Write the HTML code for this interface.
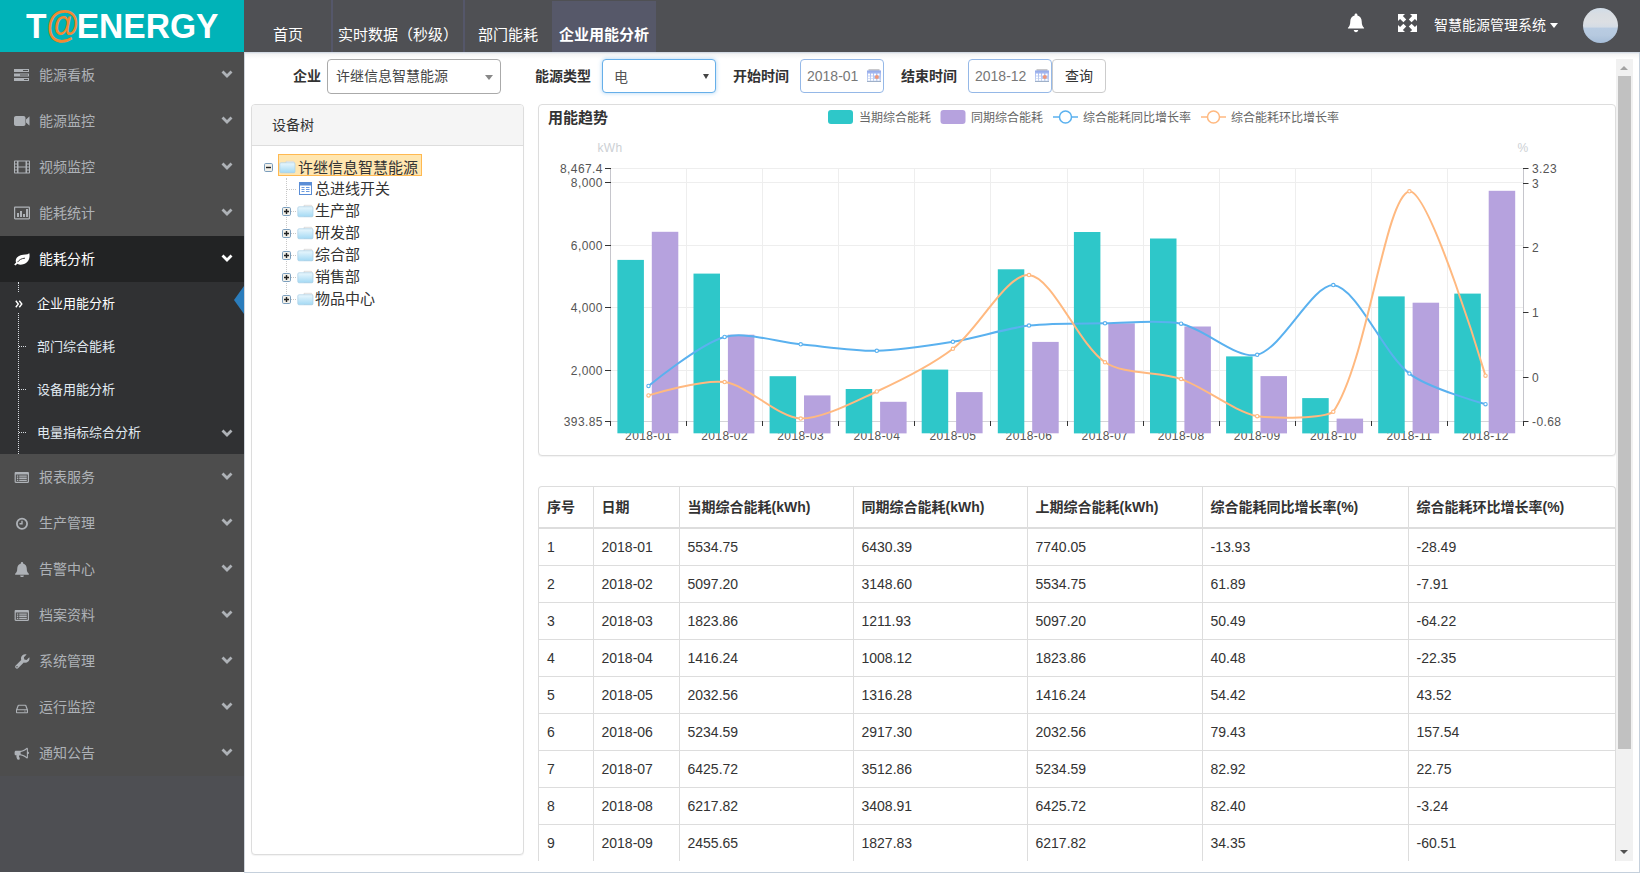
<!DOCTYPE html>
<html lang="zh-CN">
<head>
<meta charset="utf-8">
<title>智慧能源管理系统</title>
<style>
*{box-sizing:border-box;margin:0;padding:0}
html,body{width:1640px;height:877px;overflow:hidden;background:#fff}
body{font-family:"Liberation Sans","Noto Sans CJK SC",sans-serif;font-size:13px;color:#393939;position:relative}
.abs{position:absolute}
#logo{left:0;top:0;width:244px;height:52px;background:#00b3b8}
#logo .t{position:absolute;left:26px;top:5.5px;font:bold 34.5px/40px "Liberation Sans",sans-serif;color:#fff;white-space:nowrap;transform:scaleX(0.973);transform-origin:0 0}
#logo .t span{display:inline-block;color:#f08a33;font-size:38px;line-height:40px;vertical-align:top;width:31px;text-indent:-4px;transform:translate(2px,-2px) scaleX(0.9);font-weight:bold}
#hdr{left:244px;top:0;width:1396px;height:52px;background:#4f5054}
.tab{position:absolute;top:0;height:52px;color:#fff;font-size:15px;line-height:20px;padding-top:25px;white-space:nowrap;text-align:center}
.sep{position:absolute;top:0;width:2px;height:52px;background:#55576a}
#side{left:0;top:52px;width:244px;height:820px;background:#4e4f53}
.mi{position:absolute;left:0;width:244px;height:46px;background:#4d4d4d;color:#aeb2b7;font-size:14px;line-height:46px;padding-left:39px;white-space:nowrap}
.mi svg.ic{position:absolute;left:14px;top:15px;width:16px;height:16px;fill:#aeb2b7}
.mi svg.ch{position:absolute;left:221px;top:18px;width:12px;height:9px}
.mi.act{background:#222324;color:#fff}
.mi.act svg.ic{fill:#fff}
#sub{left:0;top:282px;width:244px;height:172px;background:#303133}
.si{position:absolute;left:0;width:244px;height:43px;line-height:43px;padding-left:37px;color:#e1eaf1;font-size:13px;white-space:nowrap}
.si.on{color:#fff}
#main{left:244px;top:52px;width:1396px;height:821px;background:#fff;border-right:1px solid #c5d0dc;border-bottom:1px solid #c5d0dc;border-left:1px solid #d0d5dc}
.lbl{position:absolute;top:66px;font-size:14px;line-height:20px;color:#333;font-weight:bold;white-space:nowrap}
.inp{position:absolute;top:59px;height:34px;border:1px solid #ccc;border-radius:4px;background:#fff;font-size:14px;line-height:32px;color:#777;white-space:nowrap}
.panel{position:absolute;border:1px solid #ddd;border-radius:4px;background:#fff;box-shadow:0 1px 1px rgba(0,0,0,.05)}
.tr{position:absolute;font-size:15px;line-height:22px;color:#333;white-space:nowrap;font-family:"Liberation Sans","Noto Sans CJK SC",sans-serif}
.ax{font:12px "Liberation Sans",sans-serif;fill:#555;letter-spacing:.4px}
.axn{font:12px "Liberation Sans",sans-serif;fill:#ccd0d4;letter-spacing:.4px}
.lg{font:12px "Liberation Sans","Noto Sans CJK SC",sans-serif;fill:#666}
table{border-collapse:collapse;table-layout:fixed;width:1077px;font-size:14px;color:#333}
th,td{border:1px solid #ddd;padding:0 8px;text-align:left;white-space:nowrap;overflow:hidden}
th{height:41px;font-weight:bold;border-bottom:2px solid #ddd;border-top:none;padding-bottom:2px}
td{height:37px}
th:first-child,td:first-child{border-left:none}
th:last-child,td:last-child{border-right:none}
</style>
</head>
<body>
<!-- logo -->
<div id="logo" class="abs"><div class="t">T<span>@</span>ENERGY</div></div>
<!-- header -->
<div id="hdr" class="abs">
  <div class="sep" style="left:87px"></div>
  <div class="sep" style="left:219px"></div>
  <div class="tab" style="left:29px">首页</div>
  <div class="tab" style="left:94px">实时数据（秒级）</div>
  <div class="tab" style="left:234px">部门能耗</div>
  <div class="tab" style="left:308px;width:104px;background:#565869;font-weight:bold;box-shadow:inset 0 1px #4f5054">企业用能分析</div>
  <svg class="abs" style="left:1103px;top:13px" width="18" height="20" viewBox="0 0 18 20"><path fill="#fff" d="M9 0.5c.8 0 1.4.6 1.4 1.4v.5c2.6.7 4.3 3 4.3 5.8 0 3.6.9 5.2 2.3 6.5.3.3.1.9-.4.900H1.400c-.5 0-.7-.6-.4-.9 1.4-1.3 2.3-2.9 2.3-6.5 0-2.8 1.7-5.1 4.3-5.800v-.5C7.6 1.1 8.2.5 9 .5zM6.8 17h4.400c0 1.3-1 2.2-2.2 2.200S6.8 18.3 6.8 17z"/></svg>
  <svg class="abs" style="left:1154px;top:14px" width="19" height="18" viewBox="0 0 19 18"><path fill="#fff" d="M0 0h7L4.9 2.1 8.2 5.4 5.4 8.2 2.1 4.9 0 7zM19 0v7L16.9 4.9 13.6 8.2 10.8 5.4 14.1 2.1 12 0zM0 18v-7L2.1 13.1 5.4 9.8 8.2 12.6 4.9 15.9 7 18zM19 18h-7L14.1 15.9 10.8 12.6 13.6 9.8 16.9 13.1 19 11z"/></svg>
  <div class="abs" style="left:1190px;top:15px;color:#fff;font-size:14px;line-height:20px;white-space:nowrap">智慧能源管理系统</div>
  <div class="abs" style="left:1306px;top:23px;width:0;height:0;border-left:4.500px solid transparent;border-right:4.500px solid transparent;border-top:5px solid #fff"></div>
  <div class="abs" style="left:1339px;top:8px;width:35px;height:35px;border-radius:50%;background:linear-gradient(180deg,#d0dce8 0%,#d9dde2 18%,#dcdfe3 40%,#d5dce5 54%,#b9cce2 58%,#b6c9df 78%,#a6bdd8 100%)"></div>
</div>
<!-- sidebar -->
<div id="side" class="abs">
</div>
<div class="mi" style="top:52px"><svg class="ic" viewBox="0 0 16 16"><path d="M0 2h15v3H0zM0 6.500h15v3H0zM0 11h15v3H0z"/><path fill="#4d4d4d" d="M9 3h5v1H9zM6 7.500h8v1H6zM10 12h4v1h-4z"/></svg>能源看板<svg class="ch" viewBox="0 0 12 9"><path d="M1.5 1.500L6 6l4.5-4.5" fill="none" stroke="#aeb2b7" stroke-width="2.8"/></svg></div>
<div class="mi" style="top:98px"><svg class="ic" viewBox="0 0 16 16"><path d="M2 3h7.500c1.1 0 2 .9 2 2v6c0 1.1-.9 2-2 2H2c-1.1 0-2-.9-2-2V5c0-1.1.9-2 2-2zM12 6.500l3-2.800c.3-.3.5-.2.5.2v8.200c0 .4-.2.5-.5.200l-3-2.800z"/></svg>能源监控<svg class="ch" viewBox="0 0 12 9"><path d="M1.5 1.500L6 6l4.5-4.5" fill="none" stroke="#aeb2b7" stroke-width="2.8"/></svg></div>
<div class="mi" style="top:144px"><svg class="ic" viewBox="0 0 16 16"><path fill-rule="evenodd" d="M1 1.500h14c.6 0 1 .4 1 1v11c0 .6-.4 1-1 1H1c-.6 0-1-.4-1-1v-11c0-.6.4-1 1-1zM1 2.500v2h2v-2zM1 5.500v2h2v-2zM1 8.500v2h2v-2zM1 11.500v2h2v-2zM13 2.500v2h2v-2zM13 5.500v2h2v-2zM13 8.500v2h2v-2zM13 11.500v2h2v-2zM4.5 2.500v5h7v-5zM4.5 8.500v5h7v-5z"/></svg>视频监控<svg class="ch" viewBox="0 0 12 9"><path d="M1.5 1.500L6 6l4.5-4.5" fill="none" stroke="#aeb2b7" stroke-width="2.8"/></svg></div>
<div class="mi" style="top:190px"><svg class="ic" viewBox="0 0 16 16"><path fill-rule="evenodd" d="M1.2 1.500h13.600c.7 0 1.2.5 1.2 1.200v10.600c0 .7-.5 1.2-1.2 1.200H1.200c-.7 0-1.2-.5-1.2-1.200V2.700c0-.7.5-1.2 1.2-1.200zM1.2 2.700v10.600h13.600V2.700zM3 8h2v4H3zM6 6h2v6H6zM9 9h2v3H9zM12 4h2v8h-2z"/></svg>能耗统计<svg class="ch" viewBox="0 0 12 9"><path d="M1.5 1.500L6 6l4.5-4.5" fill="none" stroke="#aeb2b7" stroke-width="2.8"/></svg></div>
<div class="mi act" style="top:236px"><svg class="ic" viewBox="0 0 16 16"><path d="M15.3 2.300C16.3 6.5 14.6 11.8 9.2 13.3 6.8 14 4.8 13.6 3.4 12.700L1.4 14.6 0.2 13.5 2.1 11.600C0.9 8.6 2.6 5.4 6.6 4.3 10 3.3 13.2 4.2 15.3 2.300z"/><path d="M3.8 10.800C5.2 8.8 7.5 7.4 10.6 7.2" fill="none" stroke="#222324" stroke-width=".9" stroke-linecap="round"/></svg>能耗分析<svg class="ch" viewBox="0 0 12 9"><path d="M1.5 1.500L6 6l4.5-4.5" fill="none" stroke="#fff" stroke-width="2.8"/></svg></div>
<div id="sub" class="abs">
<div class="abs" style="left:18px;top:0;width:0;height:172px;border-left:1px dotted #d8dde2"></div>
<div class="si on" style="top:0px"><span class="abs" style="left:11px;top:11px;width:16px;height:19px;background:#303133"></span><svg class="abs" style="left:15px;top:18px" width="8" height="8" viewBox="0 0 8 8"><path d="M0.8 0.800L3.3 4 0.8 7.200M4.3 0.800L6.8 4 4.3 7.2" fill="none" stroke="#fff" stroke-width="1.4"/></svg><span class="abs" style="right:0;top:4px;width:0;height:0;border-top:14px solid transparent;border-bottom:14px solid transparent;border-right:10px solid #2b7dbc"></span>企业用能分析</div>
<div class="si" style="top:43px"><span class="abs" style="left:19px;top:21px;width:7px;height:0;border-top:1px dotted #d8dde2"></span>部门综合能耗</div>
<div class="si" style="top:86px"><span class="abs" style="left:19px;top:21px;width:7px;height:0;border-top:1px dotted #d8dde2"></span>设备用能分析</div>
<div class="si" style="top:129px"><span class="abs" style="left:19px;top:21px;width:7px;height:0;border-top:1px dotted #d8dde2"></span><svg class="abs" style="left:221px;top:18px;width:12px;height:9px" viewBox="0 0 12 9"><path d="M1.5 1.500L6 6l4.5-4.5" fill="none" stroke="#aeb2b7" stroke-width="2.8"/></svg>电量指标综合分析</div>
</div>
<div class="mi" style="top:454px"><svg class="ic" viewBox="0 0 16 16"><path fill-rule="evenodd" d="M1.8 3h12c.7 0 1.2.5 1.2 1.200v8.600c0 .7-.5 1.2-1.2 1.200H1.800c-.7 0-1.2-.5-1.2-1.200V4.200c0-.7.5-1.2 1.2-1.200zM1.8 5.600v7.200h12V5.600zM2.9 6.500h1.400v1.300H2.900zM5.2 6.500h7.600v1.300H5.200zM2.9 8.600h1.400v1.300H2.900zM5.2 8.600h7.600v1.300H5.200zM2.9 10.700h1.400V12H2.900zM5.2 10.700h7.600V12H5.200z"/></svg>报表服务<svg class="ch" viewBox="0 0 12 9"><path d="M1.5 1.500L6 6l4.5-4.5" fill="none" stroke="#aeb2b7" stroke-width="2.8"/></svg></div>
<div class="mi" style="top:500px"><svg class="ic" viewBox="0 0 16 16"><path fill-rule="evenodd" transform="translate(0,.8)" d="M8 2a6 6 0 1 1 0 12A6 6 0 0 1 8 2zm0 1.800a4.2 4.2 0 1 0 0 8.4 4.2 4.2 0 0 0 0-8.400zM7.3 5h1.400v3.700H5.500V7.300h1.800z"/></svg>生产管理<svg class="ch" viewBox="0 0 12 9"><path d="M1.5 1.500L6 6l4.5-4.5" fill="none" stroke="#aeb2b7" stroke-width="2.8"/></svg></div>
<div class="mi" style="top:546px"><svg class="ic" viewBox="0 0 16 16"><g transform="translate(-0.8,-0.2) scale(1.1)"><path d="M8 1c.6 0 1 .4 1 1v.4c2 .5 3.3 2.3 3.3 4.4 0 2.8.7 4 1.9 5 .3.3.1.8-.3.800H2.100c-.4 0-.6-.5-.3-.8 1.2-1 1.9-2.2 1.9-5 0-2.1 1.3-3.9 3.3-4.400V2c0-.6.4-1 1-1zM6.3 13.300h3.400c0 1-.8 1.7-1.7 1.700s-1.7-.7-1.7-1.700z"/></g></svg>告警中心<svg class="ch" viewBox="0 0 12 9"><path d="M1.5 1.500L6 6l4.5-4.5" fill="none" stroke="#aeb2b7" stroke-width="2.8"/></svg></div>
<div class="mi" style="top:592px"><svg class="ic" viewBox="0 0 16 16"><path fill-rule="evenodd" d="M1.8 3h12c.7 0 1.2.5 1.2 1.200v8.600c0 .7-.5 1.2-1.2 1.200H1.800c-.7 0-1.2-.5-1.2-1.200V4.200c0-.7.5-1.2 1.2-1.200zM1.8 5.600v7.200h12V5.600zM2.9 6.500h1.400v1.300H2.900zM5.2 6.500h7.600v1.300H5.200zM2.9 8.600h1.400v1.300H2.900zM5.2 8.600h7.600v1.300H5.200zM2.9 10.700h1.400V12H2.900zM5.2 10.700h7.600V12H5.200z"/></svg>档案资料<svg class="ch" viewBox="0 0 12 9"><path d="M1.5 1.500L6 6l4.5-4.5" fill="none" stroke="#aeb2b7" stroke-width="2.8"/></svg></div>
<div class="mi" style="top:638px"><svg class="ic" viewBox="0 0 16 16"><path d="M15.3 4.200c.5 1.5.1 3.2-1.1 4.4-1.2 1.2-2.9 1.5-4.4 1L4.3 15.100c-.7.7-1.9.7-2.6 0s-.7-1.9 0-2.600l5.5-5.500c-.5-1.5-.2-3.2 1-4.4 1.2-1.2 2.9-1.6 4.4-1.100L9.9 4.200l.4 2.3 2.3.4zM3 14.400a.7.7 0 1 0 0-1.4.7.7 0 0 0 0 1.400z"/></svg>系统管理<svg class="ch" viewBox="0 0 12 9"><path d="M1.5 1.500L6 6l4.5-4.5" fill="none" stroke="#aeb2b7" stroke-width="2.8"/></svg></div>
<div class="mi" style="top:684px"><svg class="ic" viewBox="0 0 16 16"><path fill-rule="evenodd" transform="translate(1.6,3.4) scale(0.8,0.78)" d="M3.8 3h8.400c.5 0 1 .3 1.2.8l2 5.300c.1.2.1.4.1.600v2.800c0 .7-.6 1.3-1.3 1.300H1.800c-.7 0-1.3-.6-1.3-1.300V9.700c0-.2 0-.4.1-.6l2-5.300c.2-.5.7-.8 1.2-.8zM4 4.300L2.3 8.800h11.400L12 4.300zM1.8 10.100v2.400h12.400v-2.400zM10.5 10.800h1v1h-1zM12.3 10.800h1v1h-1z"/></svg>运行监控<svg class="ch" viewBox="0 0 12 9"><path d="M1.5 1.500L6 6l4.5-4.5" fill="none" stroke="#aeb2b7" stroke-width="2.8"/></svg></div>
<div class="mi" style="top:730px"><svg class="ic" viewBox="0 0 16 16"><path transform="translate(0.6,0.8) scale(0.9,0.95)" d="M14.8 6.300c.7 0 1.2.5 1.2 1.200s-.5 1.2-1.2 1.200v3.500c0 .6-.5 1.2-1.2 1.2-3.2-2.7-6.3-3.3-7.9-3.4-.6.2-1 .8-.8 1.4.1.4.3.7.7 1 -.3.5-.2 1 .3 1.5-.5.9-2.3.9-3.1.2-.5-1.5-1.1-2.8-.7-4.100H1.500C.7 10 0 9.4 0 8.600V6.800c0-.8.7-1.5 1.5-1.500H5.800C7.4 5.3 10.5 4.7 13.6 2c.7 0 1.2.5 1.2 1.200zm-1.2 5.400V3.600c-2.7 2.1-5.3 2.7-6.9 2.900v2.400c1.6.2 4.2.8 6.9 2.800z"/></svg>通知公告<svg class="ch" viewBox="0 0 12 9"><path d="M1.5 1.500L6 6l4.5-4.5" fill="none" stroke="#aeb2b7" stroke-width="2.8"/></svg></div>
<!-- main -->
<div id="main" class="abs"></div>
<div class="abs" style="left:245px;top:52px;width:1394px;height:7px;background:linear-gradient(180deg,#c9d2df 0,#e9ebee 1.5px,#f4f4f4 2px,#fff 7px)"></div>
<div class="lbl" style="left:293px">企业</div>
<div class="inp" style="left:327px;width:174px;height:35px;padding-left:8px;color:#444;font-size:14px;border-color:#aaa;line-height:33px">许继信息智慧能源<span class="abs" style="right:7px;top:15px;width:0;height:0;border-left:4px solid transparent;border-right:4px solid transparent;border-top:5px solid #888"></span></div>
<div class="lbl" style="left:535px">能源类型</div>
<div class="inp" style="left:602px;width:114px;padding-left:11px;border-color:#66afe9;box-shadow:0 0 4px rgba(102,175,233,.55);color:#555;font-size:14px;line-height:34px">电<span class="abs" style="right:6px;top:14px;width:0;height:0;border-left:3px solid transparent;border-right:3px solid transparent;border-top:5.500px solid #444"></span></div>
<div class="lbl" style="left:733px">开始时间</div>
<div class="inp" style="left:800px;width:84px;padding-left:6px;border-color:#95b8e7">2018-01<svg class="abs" style="left:66px;top:9px" width="14" height="13" viewBox="0 0 14 13"><defs><linearGradient id="cg1" x1="0" y1="0" x2="0" y2="1"><stop offset="0" stop-color="#8fa6e8"/><stop offset=".3" stop-color="#aec0f2"/><stop offset="1" stop-color="#c9d8f0"/></linearGradient></defs><rect x="1.5" y="0" width="11" height="2" fill="#c9c9cc"/><rect x="0" y="1.5" width="14" height="11.5" fill="url(#cg1)"/><rect x="0" y="12" width="14" height="1" fill="#9fb0c8"/><g fill="#fff"><rect x="1" y="4.6" width="2" height="2"/><rect x="4" y="4.6" width="2" height="2"/><rect x="7" y="4.6" width="2" height="2"/><rect x="10.5" y="4.6" width="2" height="2"/><rect x="1" y="7.4" width="2" height="2"/><rect x="4" y="7.4" width="2" height="2"/><rect x="1" y="10" width="2" height="1.6"/><rect x="4" y="10" width="2" height="1.6"/><rect x="7" y="10" width="2" height="1.6"/><rect x="10.5" y="10" width="2" height="1.6"/></g><circle cx="9.8" cy="8" r="2" fill="#f0977a"/></svg></div>
<div class="lbl" style="left:901px">结束时间</div>
<div class="inp" style="left:968px;width:84px;padding-left:6px;border-color:#95b8e7">2018-12<svg class="abs" style="left:66px;top:9px" width="14" height="13" viewBox="0 0 14 13"><defs><linearGradient id="cg2" x1="0" y1="0" x2="0" y2="1"><stop offset="0" stop-color="#8fa6e8"/><stop offset=".3" stop-color="#aec0f2"/><stop offset="1" stop-color="#c9d8f0"/></linearGradient></defs><rect x="1.5" y="0" width="11" height="2" fill="#c9c9cc"/><rect x="0" y="1.5" width="14" height="11.5" fill="url(#cg2)"/><rect x="0" y="12" width="14" height="1" fill="#9fb0c8"/><g fill="#fff"><rect x="1" y="4.6" width="2" height="2"/><rect x="4" y="4.6" width="2" height="2"/><rect x="7" y="4.6" width="2" height="2"/><rect x="10.5" y="4.6" width="2" height="2"/><rect x="1" y="7.4" width="2" height="2"/><rect x="4" y="7.4" width="2" height="2"/><rect x="1" y="10" width="2" height="1.6"/><rect x="4" y="10" width="2" height="1.6"/><rect x="7" y="10" width="2" height="1.6"/><rect x="10.5" y="10" width="2" height="1.6"/></g><circle cx="9.8" cy="8" r="2" fill="#f0977a"/></svg></div>
<div class="inp" style="left:1052px;width:54px;text-align:center;color:#333;font-size:14px">查询</div>

<!-- device tree -->
<div class="panel" style="left:251px;top:104px;width:273px;height:751px">
  <div style="height:41px;background:#f5f5f5;border-bottom:1px solid #ddd;border-radius:3px 3px 0 0;padding-left:20px;line-height:40px;font-size:14px;color:#333">设备树</div>
</div>
<svg class="abs" style="left:264px;top:163px" width="9" height="9" viewBox="0 0 9 9"><rect x=".5" y=".5" width="8" height="8" rx="1.2" fill="#f3f1ea" stroke="#7b9ebd"/><path d="M2 4.500h5" stroke="#222" stroke-width="1.4" fill="none"/></svg>
<div class="abs" style="left:278px;top:154px;width:144px;height:22px;background:#ffe6b0;border:1px solid #ffb951"></div>
<svg class="abs" style="left:279px;top:159px" width="17" height="15" viewBox="0 0 17 15"><defs><linearGradient id="fg0" x1="0" y1="0" x2="0" y2="1"><stop offset="0" stop-color="#eaf7fd"/><stop offset="1" stop-color="#a3d9f4"/></linearGradient></defs><path d="M7 2.300h7.500l1 1.500v9.700H7z" fill="#f4f4f4" stroke="#cfcfcf" stroke-width=".6"/><rect x="0.8" y="3.8" width="15.2" height="10" rx="1.2" fill="url(#fg0)" stroke="#a9d0e6" stroke-width=".7"/></svg>
<div class="tr" style="left:298px;top:157px">许继信息智慧能源</div>
<div class="abs" style="left:286px;top:178px;width:0;height:122px;border-left:1px dotted #c8c8c8"></div>
<div class="abs" style="left:287px;top:189px;width:9px;height:0;border-top:1px dotted #c8c8c8"></div>
<svg class="abs" style="left:299px;top:182px" width="13" height="13" viewBox="0 0 13 13"><rect x=".5" y=".5" width="12" height="12" fill="#fff" stroke="#5a8dd6"/><rect x="1" y="1" width="11" height="2.5" fill="#5a8dd6"/><path d="M2.5 5.500h3M7 5.500h3.500M2.5 7.500h3M7 7.500h3.500M2.5 9.500h3M7 9.500h3.5" stroke="#6b9be0" stroke-width="1"/></svg>
<div class="tr" style="left:315px;top:178px">总进线开关</div>
<svg class="abs" style="left:282px;top:207px" width="9" height="9" viewBox="0 0 9 9"><rect x=".5" y=".5" width="8" height="8" rx="1.2" fill="#f3f1ea" stroke="#7b9ebd"/><path d="M2 4.500h5M4.5 2v5" stroke="#222" stroke-width="1.4" fill="none"/></svg>
<div class="abs" style="left:291px;top:211px;width:5px;height:0;border-top:1px dotted #c8c8c8"></div>
<svg class="abs" style="left:297px;top:203px" width="17" height="15" viewBox="0 0 17 15"><defs><linearGradient id="fg1" x1="0" y1="0" x2="0" y2="1"><stop offset="0" stop-color="#eaf7fd"/><stop offset="1" stop-color="#a3d9f4"/></linearGradient></defs><path d="M7 2.300h7.500l1 1.500v9.700H7z" fill="#f4f4f4" stroke="#cfcfcf" stroke-width=".6"/><rect x="0.8" y="3.8" width="15.2" height="10" rx="1.2" fill="url(#fg1)" stroke="#a9d0e6" stroke-width=".7"/></svg>
<div class="tr" style="left:315px;top:200px">生产部</div>
<svg class="abs" style="left:282px;top:229px" width="9" height="9" viewBox="0 0 9 9"><rect x=".5" y=".5" width="8" height="8" rx="1.2" fill="#f3f1ea" stroke="#7b9ebd"/><path d="M2 4.500h5M4.5 2v5" stroke="#222" stroke-width="1.4" fill="none"/></svg>
<div class="abs" style="left:291px;top:233px;width:5px;height:0;border-top:1px dotted #c8c8c8"></div>
<svg class="abs" style="left:297px;top:225px" width="17" height="15" viewBox="0 0 17 15"><defs><linearGradient id="fg2" x1="0" y1="0" x2="0" y2="1"><stop offset="0" stop-color="#eaf7fd"/><stop offset="1" stop-color="#a3d9f4"/></linearGradient></defs><path d="M7 2.300h7.500l1 1.500v9.700H7z" fill="#f4f4f4" stroke="#cfcfcf" stroke-width=".6"/><rect x="0.8" y="3.8" width="15.2" height="10" rx="1.2" fill="url(#fg2)" stroke="#a9d0e6" stroke-width=".7"/></svg>
<div class="tr" style="left:315px;top:222px">研发部</div>
<svg class="abs" style="left:282px;top:251px" width="9" height="9" viewBox="0 0 9 9"><rect x=".5" y=".5" width="8" height="8" rx="1.2" fill="#f3f1ea" stroke="#7b9ebd"/><path d="M2 4.500h5M4.5 2v5" stroke="#222" stroke-width="1.4" fill="none"/></svg>
<div class="abs" style="left:291px;top:255px;width:5px;height:0;border-top:1px dotted #c8c8c8"></div>
<svg class="abs" style="left:297px;top:247px" width="17" height="15" viewBox="0 0 17 15"><defs><linearGradient id="fg3" x1="0" y1="0" x2="0" y2="1"><stop offset="0" stop-color="#eaf7fd"/><stop offset="1" stop-color="#a3d9f4"/></linearGradient></defs><path d="M7 2.300h7.500l1 1.500v9.700H7z" fill="#f4f4f4" stroke="#cfcfcf" stroke-width=".6"/><rect x="0.8" y="3.8" width="15.2" height="10" rx="1.2" fill="url(#fg3)" stroke="#a9d0e6" stroke-width=".7"/></svg>
<div class="tr" style="left:315px;top:244px">综合部</div>
<svg class="abs" style="left:282px;top:273px" width="9" height="9" viewBox="0 0 9 9"><rect x=".5" y=".5" width="8" height="8" rx="1.2" fill="#f3f1ea" stroke="#7b9ebd"/><path d="M2 4.500h5M4.5 2v5" stroke="#222" stroke-width="1.4" fill="none"/></svg>
<div class="abs" style="left:291px;top:277px;width:5px;height:0;border-top:1px dotted #c8c8c8"></div>
<svg class="abs" style="left:297px;top:269px" width="17" height="15" viewBox="0 0 17 15"><defs><linearGradient id="fg4" x1="0" y1="0" x2="0" y2="1"><stop offset="0" stop-color="#eaf7fd"/><stop offset="1" stop-color="#a3d9f4"/></linearGradient></defs><path d="M7 2.300h7.500l1 1.500v9.700H7z" fill="#f4f4f4" stroke="#cfcfcf" stroke-width=".6"/><rect x="0.8" y="3.8" width="15.2" height="10" rx="1.2" fill="url(#fg4)" stroke="#a9d0e6" stroke-width=".7"/></svg>
<div class="tr" style="left:315px;top:266px">销售部</div>
<svg class="abs" style="left:282px;top:295px" width="9" height="9" viewBox="0 0 9 9"><rect x=".5" y=".5" width="8" height="8" rx="1.2" fill="#f3f1ea" stroke="#7b9ebd"/><path d="M2 4.500h5M4.5 2v5" stroke="#222" stroke-width="1.4" fill="none"/></svg>
<div class="abs" style="left:291px;top:299px;width:5px;height:0;border-top:1px dotted #c8c8c8"></div>
<svg class="abs" style="left:297px;top:291px" width="17" height="15" viewBox="0 0 17 15"><defs><linearGradient id="fg5" x1="0" y1="0" x2="0" y2="1"><stop offset="0" stop-color="#eaf7fd"/><stop offset="1" stop-color="#a3d9f4"/></linearGradient></defs><path d="M7 2.300h7.500l1 1.500v9.700H7z" fill="#f4f4f4" stroke="#cfcfcf" stroke-width=".6"/><rect x="0.8" y="3.8" width="15.2" height="10" rx="1.2" fill="url(#fg5)" stroke="#a9d0e6" stroke-width=".7"/></svg>
<div class="tr" style="left:315px;top:288px">物品中心</div>
<!-- chart panel -->
<div class="panel" style="left:538px;top:104px;width:1078px;height:352px"></div>
<div class="abs" style="left:548px;top:108px;font-size:15px;font-weight:bold;line-height:20px;color:#333">用能趋势</div>
<svg class="abs" style="left:0;top:0" width="1640" height="470" viewBox="0 0 1640 470">
<line x1="610.5" y1="168.5" x2="1523.5" y2="168.5" stroke="#eee" stroke-width="1"/>
<line x1="610.5" y1="182.5" x2="1523.5" y2="182.5" stroke="#eee" stroke-width="1"/>
<line x1="610.5" y1="245.5" x2="1523.5" y2="245.5" stroke="#eee" stroke-width="1"/>
<line x1="610.5" y1="307.5" x2="1523.5" y2="307.5" stroke="#eee" stroke-width="1"/>
<line x1="610.5" y1="370.5" x2="1523.5" y2="370.5" stroke="#eee" stroke-width="1"/>
<line x1="686.5" y1="168.0" x2="686.5" y2="421.0" stroke="#eee" stroke-width="1"/>
<line x1="762.5" y1="168.0" x2="762.5" y2="421.0" stroke="#eee" stroke-width="1"/>
<line x1="838.5" y1="168.0" x2="838.5" y2="421.0" stroke="#eee" stroke-width="1"/>
<line x1="914.5" y1="168.0" x2="914.5" y2="421.0" stroke="#eee" stroke-width="1"/>
<line x1="990.5" y1="168.0" x2="990.5" y2="421.0" stroke="#eee" stroke-width="1"/>
<line x1="1067.5" y1="168.0" x2="1067.5" y2="421.0" stroke="#eee" stroke-width="1"/>
<line x1="1143.5" y1="168.0" x2="1143.5" y2="421.0" stroke="#eee" stroke-width="1"/>
<line x1="1219.5" y1="168.0" x2="1219.5" y2="421.0" stroke="#eee" stroke-width="1"/>
<line x1="1295.5" y1="168.0" x2="1295.5" y2="421.0" stroke="#eee" stroke-width="1"/>
<line x1="1371.5" y1="168.0" x2="1371.5" y2="421.0" stroke="#eee" stroke-width="1"/>
<line x1="1447.5" y1="168.0" x2="1447.5" y2="421.0" stroke="#eee" stroke-width="1"/>
<line x1="610.5" y1="168.0" x2="610.5" y2="421.5" stroke="#c6c6cc" stroke-width="1"/>
<line x1="1523.5" y1="168.0" x2="1523.5" y2="421.5" stroke="#c6c6cc" stroke-width="1"/>
<line x1="610.5" y1="421.5" x2="1523.5" y2="421.5" stroke="#d4d4d8" stroke-width="1"/>
<line x1="605.0" y1="168.5" x2="611.0" y2="168.5" stroke="#333"/>
<text x="602.9" y="172.7" text-anchor="end" class="ax">8,467.4</text>
<line x1="605.0" y1="182.5" x2="611.0" y2="182.5" stroke="#333"/>
<text x="602.9" y="186.7" text-anchor="end" class="ax">8,000</text>
<line x1="605.0" y1="245.5" x2="611.0" y2="245.5" stroke="#333"/>
<text x="602.9" y="249.7" text-anchor="end" class="ax">6,000</text>
<line x1="605.0" y1="307.5" x2="611.0" y2="307.5" stroke="#333"/>
<text x="602.9" y="311.7" text-anchor="end" class="ax">4,000</text>
<line x1="605.0" y1="370.5" x2="611.0" y2="370.5" stroke="#333"/>
<text x="602.9" y="374.7" text-anchor="end" class="ax">2,000</text>
<line x1="605.0" y1="421.5" x2="611.0" y2="421.5" stroke="#333"/>
<text x="602.9" y="425.7" text-anchor="end" class="ax">393.85</text>
<line x1="1523.0" y1="168.5" x2="1528.5" y2="168.5" stroke="#333"/>
<text x="1532.0" y="172.7" class="ax">3.23</text>
<line x1="1523.0" y1="183.5" x2="1528.5" y2="183.5" stroke="#333"/>
<text x="1532.0" y="187.7" class="ax">3</text>
<line x1="1523.0" y1="247.5" x2="1528.5" y2="247.5" stroke="#333"/>
<text x="1532.0" y="251.7" class="ax">2</text>
<line x1="1523.0" y1="312.5" x2="1528.5" y2="312.5" stroke="#333"/>
<text x="1532.0" y="316.7" class="ax">1</text>
<line x1="1523.0" y1="377.5" x2="1528.5" y2="377.5" stroke="#333"/>
<text x="1532.0" y="381.7" class="ax">0</text>
<line x1="1523.0" y1="421.5" x2="1528.5" y2="421.5" stroke="#333"/>
<text x="1532.0" y="425.7" class="ax">-0.68</text>
<line x1="610.5" y1="421.0" x2="610.5" y2="426.0" stroke="#333"/>
<line x1="686.5" y1="421.0" x2="686.5" y2="426.0" stroke="#333"/>
<line x1="762.5" y1="421.0" x2="762.5" y2="426.0" stroke="#333"/>
<line x1="838.5" y1="421.0" x2="838.5" y2="426.0" stroke="#333"/>
<line x1="914.5" y1="421.0" x2="914.5" y2="426.0" stroke="#333"/>
<line x1="990.5" y1="421.0" x2="990.5" y2="426.0" stroke="#333"/>
<line x1="1067.5" y1="421.0" x2="1067.5" y2="426.0" stroke="#333"/>
<line x1="1143.5" y1="421.0" x2="1143.5" y2="426.0" stroke="#333"/>
<line x1="1219.5" y1="421.0" x2="1219.5" y2="426.0" stroke="#333"/>
<line x1="1295.5" y1="421.0" x2="1295.5" y2="426.0" stroke="#333"/>
<line x1="1371.5" y1="421.0" x2="1371.5" y2="426.0" stroke="#333"/>
<line x1="1447.5" y1="421.0" x2="1447.5" y2="426.0" stroke="#333"/>
<line x1="1523.5" y1="421.0" x2="1523.5" y2="426.0" stroke="#333"/>
<text x="648.5" y="440" text-anchor="middle" class="ax">2018-01</text>
<text x="724.6" y="440" text-anchor="middle" class="ax">2018-02</text>
<text x="800.7" y="440" text-anchor="middle" class="ax">2018-03</text>
<text x="876.8" y="440" text-anchor="middle" class="ax">2018-04</text>
<text x="952.9" y="440" text-anchor="middle" class="ax">2018-05</text>
<text x="1029.0" y="440" text-anchor="middle" class="ax">2018-06</text>
<text x="1105.0" y="440" text-anchor="middle" class="ax">2018-07</text>
<text x="1181.1" y="440" text-anchor="middle" class="ax">2018-08</text>
<text x="1257.2" y="440" text-anchor="middle" class="ax">2018-09</text>
<text x="1333.3" y="440" text-anchor="middle" class="ax">2018-10</text>
<text x="1409.4" y="440" text-anchor="middle" class="ax">2018-11</text>
<text x="1485.5" y="440" text-anchor="middle" class="ax">2018-12</text>
<text x="610.0" y="152" text-anchor="middle" class="axn">kWh</text>
<text x="1523.0" y="152" text-anchor="middle" class="axn">%</text>
<rect x="617.4" y="259.9" width="26.5" height="173.4" fill="#2ec7c9"/>
<rect x="651.8" y="231.8" width="26.5" height="201.5" fill="#b6a2de"/>
<rect x="693.5" y="273.6" width="26.5" height="159.7" fill="#2ec7c9"/>
<rect x="727.9" y="334.7" width="26.5" height="98.7" fill="#b6a2de"/>
<rect x="769.6" y="376.2" width="26.5" height="57.2" fill="#2ec7c9"/>
<rect x="804.0" y="395.4" width="26.5" height="38.0" fill="#b6a2de"/>
<rect x="845.7" y="389.0" width="26.5" height="44.4" fill="#2ec7c9"/>
<rect x="880.1" y="401.8" width="26.5" height="31.6" fill="#b6a2de"/>
<rect x="921.7" y="369.6" width="26.5" height="63.7" fill="#2ec7c9"/>
<rect x="956.1" y="392.1" width="26.5" height="41.2" fill="#b6a2de"/>
<rect x="997.8" y="269.3" width="26.5" height="164.0" fill="#2ec7c9"/>
<rect x="1032.2" y="341.9" width="26.5" height="91.4" fill="#b6a2de"/>
<rect x="1073.9" y="232.0" width="26.5" height="201.4" fill="#2ec7c9"/>
<rect x="1108.3" y="323.3" width="26.5" height="110.1" fill="#b6a2de"/>
<rect x="1150.0" y="238.5" width="26.5" height="194.8" fill="#2ec7c9"/>
<rect x="1184.4" y="326.5" width="26.5" height="106.8" fill="#b6a2de"/>
<rect x="1226.1" y="356.4" width="26.5" height="77.0" fill="#2ec7c9"/>
<rect x="1260.5" y="376.1" width="26.5" height="57.3" fill="#b6a2de"/>
<rect x="1302.2" y="398.1" width="26.5" height="35.3" fill="#2ec7c9"/>
<rect x="1336.6" y="418.6" width="26.5" height="14.7" fill="#b6a2de"/>
<rect x="1378.2" y="296.4" width="26.5" height="136.9" fill="#2ec7c9"/>
<rect x="1412.6" y="302.7" width="26.5" height="130.7" fill="#b6a2de"/>
<rect x="1454.3" y="293.6" width="26.5" height="139.8" fill="#2ec7c9"/>
<rect x="1488.7" y="190.8" width="26.5" height="242.5" fill="#b6a2de"/>
<path d="M648.5,386.0C648.5,386.0 699.9,343.7 724.6,337.0C745.5,331.2 777.9,342.3 800.7,344.3C823.5,346.4 854.0,351.2 876.8,350.8C899.7,350.4 930.2,345.5 952.9,341.8C975.9,338.0 1005.9,328.4 1029.0,325.6C1051.5,322.9 1082.2,323.6 1105.0,323.3C1127.9,323.1 1159.2,319.2 1181.1,323.7C1204.8,328.6 1237.0,359.9 1257.2,354.8C1282.6,348.3 1311.9,285.1 1333.3,285.1C1357.5,288.1 1382.6,352.6 1409.4,373.6C1428.2,388.3 1485.5,404.2 1485.5,404.2" fill="none" stroke="#5ab1ef" stroke-width="2"/>
<circle cx="648.5" cy="386.0" r="1.7" fill="#fff" stroke="#5ab1ef" stroke-width="1.1"/>
<circle cx="724.6" cy="337.0" r="1.7" fill="#fff" stroke="#5ab1ef" stroke-width="1.1"/>
<circle cx="800.7" cy="344.3" r="1.7" fill="#fff" stroke="#5ab1ef" stroke-width="1.1"/>
<circle cx="876.8" cy="350.8" r="1.7" fill="#fff" stroke="#5ab1ef" stroke-width="1.1"/>
<circle cx="952.9" cy="341.8" r="1.7" fill="#fff" stroke="#5ab1ef" stroke-width="1.1"/>
<circle cx="1029.0" cy="325.6" r="1.7" fill="#fff" stroke="#5ab1ef" stroke-width="1.1"/>
<circle cx="1105.0" cy="323.3" r="1.7" fill="#fff" stroke="#5ab1ef" stroke-width="1.1"/>
<circle cx="1181.1" cy="323.7" r="1.7" fill="#fff" stroke="#5ab1ef" stroke-width="1.1"/>
<circle cx="1257.2" cy="354.8" r="1.7" fill="#fff" stroke="#5ab1ef" stroke-width="1.1"/>
<circle cx="1333.3" cy="285.1" r="1.7" fill="#fff" stroke="#5ab1ef" stroke-width="1.1"/>
<circle cx="1409.4" cy="373.6" r="1.7" fill="#fff" stroke="#5ab1ef" stroke-width="1.1"/>
<circle cx="1485.5" cy="404.2" r="1.7" fill="#fff" stroke="#5ab1ef" stroke-width="1.1"/>
<path d="M648.5,395.4C648.5,395.4 702.8,378.8 724.6,382.1C748.5,385.7 777.4,417.1 800.7,418.6C823.0,418.6 854.8,401.5 876.8,391.5C900.5,380.6 932.3,364.6 952.9,348.8C977.9,329.7 1007.1,273.1 1029.0,275.1C1052.8,277.2 1077.8,343.6 1105.0,362.3C1123.4,374.8 1159.2,371.3 1181.1,379.1C1204.9,387.5 1233.2,411.0 1257.2,416.2C1278.8,418.6 1322.1,418.6 1333.3,411.8C1367.7,361.0 1384.8,197.1 1409.4,191.3C1430.4,191.3 1485.5,375.7 1485.5,375.7" fill="none" stroke="#ffb980" stroke-width="2"/>
<circle cx="648.5" cy="395.4" r="1.7" fill="#fff" stroke="#ffb980" stroke-width="1.1"/>
<circle cx="724.6" cy="382.1" r="1.7" fill="#fff" stroke="#ffb980" stroke-width="1.1"/>
<circle cx="800.7" cy="418.6" r="1.7" fill="#fff" stroke="#ffb980" stroke-width="1.1"/>
<circle cx="876.8" cy="391.5" r="1.7" fill="#fff" stroke="#ffb980" stroke-width="1.1"/>
<circle cx="952.9" cy="348.8" r="1.7" fill="#fff" stroke="#ffb980" stroke-width="1.1"/>
<circle cx="1029.0" cy="275.1" r="1.7" fill="#fff" stroke="#ffb980" stroke-width="1.1"/>
<circle cx="1105.0" cy="362.3" r="1.7" fill="#fff" stroke="#ffb980" stroke-width="1.1"/>
<circle cx="1181.1" cy="379.1" r="1.7" fill="#fff" stroke="#ffb980" stroke-width="1.1"/>
<circle cx="1257.2" cy="416.2" r="1.7" fill="#fff" stroke="#ffb980" stroke-width="1.1"/>
<circle cx="1333.3" cy="411.8" r="1.7" fill="#fff" stroke="#ffb980" stroke-width="1.1"/>
<circle cx="1409.4" cy="191.3" r="1.7" fill="#fff" stroke="#ffb980" stroke-width="1.1"/>
<circle cx="1485.5" cy="375.7" r="1.7" fill="#fff" stroke="#ffb980" stroke-width="1.1"/>
<g>
<rect x="828" y="110" width="25" height="14" rx="3" fill="#2ec7c9"/><text x="859" y="121.5" class="lg">当期综合能耗</text>
<rect x="940.5" y="110" width="25" height="14" rx="3" fill="#b6a2de"/><text x="971" y="121.5" class="lg">同期综合能耗</text>
<line x1="1053" y1="117" x2="1078" y2="117" stroke="#5ab1ef" stroke-width="1.5"/><circle cx="1065.5" cy="117" r="6" fill="#fff" stroke="#5ab1ef" stroke-width="1.5"/><text x="1083" y="121.5" class="lg">综合能耗同比增长率</text>
<line x1="1201" y1="117" x2="1226" y2="117" stroke="#ffb980" stroke-width="1.5"/><circle cx="1213.5" cy="117" r="6" fill="#fff" stroke="#ffb980" stroke-width="1.5"/><text x="1231" y="121.5" class="lg">综合能耗环比增长率</text>
</g>
</svg>
<!-- table -->
<div class="panel" style="left:538px;top:486px;width:1078px;height:375px;border-bottom:none;border-radius:4px 4px 0 0;overflow:hidden;box-shadow:none">
<table>
<colgroup><col style="width:54px"><col style="width:86px"><col style="width:174px"><col style="width:174px"><col style="width:175px"><col style="width:206px"><col style="width:208px"></colgroup>
<tr><th>序号</th><th>日期</th><th>当期综合能耗(kWh)</th><th>同期综合能耗(kWh)</th><th>上期综合能耗(kWh)</th><th>综合能耗同比增长率(%)</th><th>综合能耗环比增长率(%)</th></tr>
<tr><td>1</td><td>2018-01</td><td>5534.75</td><td>6430.39</td><td>7740.05</td><td>-13.93</td><td>-28.49</td></tr>
<tr><td>2</td><td>2018-02</td><td>5097.20</td><td>3148.60</td><td>5534.75</td><td>61.89</td><td>-7.91</td></tr>
<tr><td>3</td><td>2018-03</td><td>1823.86</td><td>1211.93</td><td>5097.20</td><td>50.49</td><td>-64.22</td></tr>
<tr><td>4</td><td>2018-04</td><td>1416.24</td><td>1008.12</td><td>1823.86</td><td>40.48</td><td>-22.35</td></tr>
<tr><td>5</td><td>2018-05</td><td>2032.56</td><td>1316.28</td><td>1416.24</td><td>54.42</td><td>43.52</td></tr>
<tr><td>6</td><td>2018-06</td><td>5234.59</td><td>2917.30</td><td>2032.56</td><td>79.43</td><td>157.54</td></tr>
<tr><td>7</td><td>2018-07</td><td>6425.72</td><td>3512.86</td><td>5234.59</td><td>82.92</td><td>22.75</td></tr>
<tr><td>8</td><td>2018-08</td><td>6217.82</td><td>3408.91</td><td>6425.72</td><td>82.40</td><td>-3.24</td></tr>
<tr><td>9</td><td>2018-09</td><td>2455.65</td><td>1827.83</td><td>6217.82</td><td>34.35</td><td>-60.51</td></tr>
<tr><td>10</td><td>2018-10</td><td>1157.10</td><td>502.33</td><td>2455.65</td><td>143.00</td><td>-52.30</td></tr>

</table>
</div>
<!-- scrollbar -->
<div class="abs" style="left:1616px;top:59px;width:17px;height:802px;background:#f1f1f1"></div>
<div class="abs" style="left:1618px;top:76px;width:13px;height:673px;background:#c1c1c1"></div>
<div class="abs" style="left:1620px;top:66px;width:0;height:0;border-left:4px solid transparent;border-right:4px solid transparent;border-bottom:4px solid #a3a3a3"></div>
<div class="abs" style="left:1620px;top:850px;width:0;height:0;border-left:4px solid transparent;border-right:4px solid transparent;border-top:4px solid #505050"></div>
</body>
</html>
